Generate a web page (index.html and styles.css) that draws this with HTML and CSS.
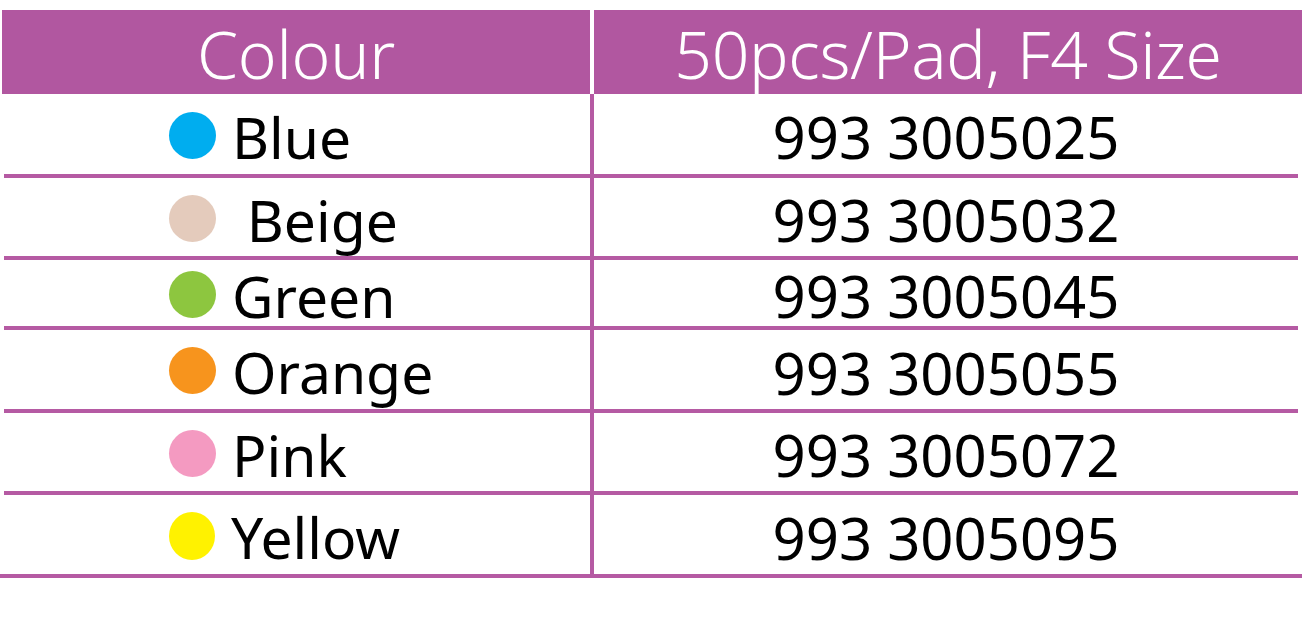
FILE: index.html
```html
<!DOCTYPE html>
<html>
<head>
<meta charset="utf-8">
<link rel="stylesheet" href="styles.css">
</head>
<body>
<div class="sheet">
  <div class="head">
    <div class="hcell hleft">Colour</div>
    <div class="hcell hright">50pcs/Pad, F4 Size</div>
  </div>
  <div class="row r1">
    <div class="left"><span class="dot blue"></span><span class="label">Blue</span></div>
    <div class="right">993 3005025</div>
  </div>
  <div class="row r2">
    <div class="left"><span class="dot beige"></span><span class="label">&nbsp;Beige</span></div>
    <div class="right">993 3005032</div>
  </div>
  <div class="row r3">
    <div class="left"><span class="dot green"></span><span class="label">Green</span></div>
    <div class="right">993 3005045</div>
  </div>
  <div class="row r4">
    <div class="left"><span class="dot orange"></span><span class="label">Orange</span></div>
    <div class="right">993 3005055</div>
  </div>
  <div class="row r5">
    <div class="left"><span class="dot pink"></span><span class="label">Pink</span></div>
    <div class="right">993 3005072</div>
  </div>
  <div class="row r6 last">
    <div class="left"><span class="dot yellow"></span><span class="label">Yellow</span></div>
    <div class="right">993 3005095</div>
  </div>
</div>
</body>
</html>
```

FILE: styles.css
```css
html, body {
  margin: 0;
  padding: 0;
  background: #ffffff;
}

body {
  width: 1304px;
  height: 635px;
  overflow: hidden;
  font-family: "Noto Sans", "Open Sans", sans-serif;
  color: #000000;
}

.sheet {
  display: flex;
  flex-direction: column;
  padding-top: 10px;
}

.head {
  display: grid;
  grid-template-columns: 592px 1fr;
  height: 84px;
  margin: 0 2px 0 2px;
  background: #b157a0;
  color: #ffffff;
}

.hcell {
  display: flex;
  align-items: center;
  justify-content: center;
  font-size: 66px;
  font-weight: 300;
  line-height: 1;
  padding-top: 2px;
  letter-spacing: -0.3px;
}

.hleft {
  border-right: 4px solid #ffffff;
}

.row {
  display: grid;
  grid-template-columns: 590px 1fr;
  margin: 0 6px 0 4px;
  border-bottom: 4px solid #b55aa3;
}

.row.last {
  grid-template-columns: 594px 1fr;
  margin: 0 2px 0 0;
}

.r1 { height: 80px; }
.r2 { height: 78px; }
.r3 { height: 66px; }
.r4 { height: 79px; }
.r5 { height: 78px; }
.r6 { height: 79px; }

.left {
  display: flex;
  align-items: center;
  padding-left: 165px;
  border-right: 4px solid #b55aa3;
}

.row.last .left {
  padding-left: 169px;
}

.dot {
  width: 47px;
  height: 47px;
  border-radius: 50%;
  flex: none;
  margin-top: 2px;
}

.blue { background: #00adef; }
.beige { background: #e4cbbc; }
.green { background: #8dc63f; }
.orange { background: #f7941d; }
.pink { background: #f49ac1; }
.yellow { background: #fff200; width: 46px; height: 48px; }

.label {
  font-size: 57px;
  line-height: 1;
  margin-left: 16px;
  padding-top: 6px;
}

.right {
  display: flex;
  align-items: center;
  justify-content: center;
  font-size: 58px;
  line-height: 1;
  padding-top: 6px;
}

.row.last .right {
  padding-right: 4px;
}
```
